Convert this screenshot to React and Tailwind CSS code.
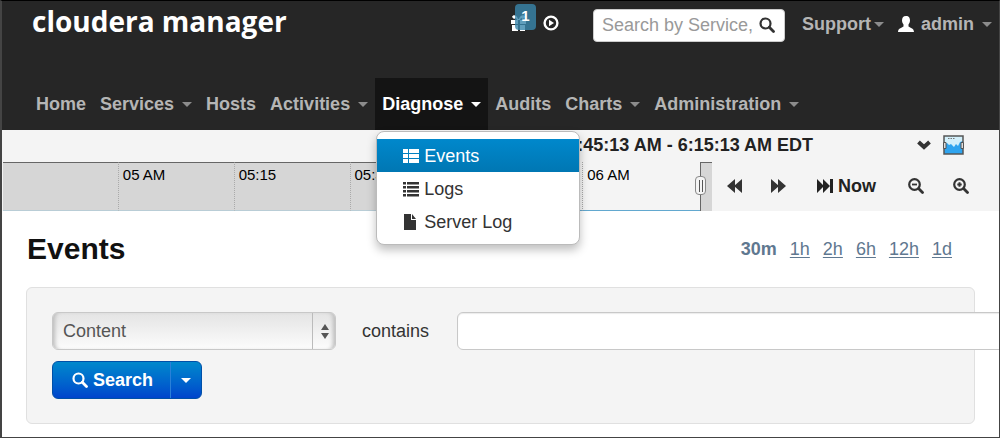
import React from 'react'
import { useState } from 'react'

function Caret({ className = '' }) {
  return (
    <svg viewBox="0 0 10 5" className={`w-[10px] h-[5px] fill-current ${className}`} aria-hidden="true">
      <path d="M0 0h10L5 5z" />
    </svg>
  )
}

function SearchIcon({ sign }) {
  return (
    <svg viewBox="0 0 16 16" className="w-4 h-4 shrink-0" fill="none" stroke="currentColor" aria-hidden="true">
      <circle cx="6.5" cy="6.5" r="5.3" strokeWidth="2.2" />
      <path d="M10.8 10.8l3.700 3.700" strokeWidth="2.8" strokeLinecap="round" />
      {sign === 'minus' && <path d="M4 6.5h5" strokeWidth="1.8" />}
      {sign === 'plus' && <path d="M4.300 6.500h4.400M6.500 4.300v4.400" strokeWidth="2" />}
    </svg>
  )
}

function GlassIcon() {
  return (
    <svg viewBox="0 0 16 16" className="w-4 h-4 shrink-0" fill="none" stroke="currentColor" aria-hidden="true">
      <circle cx="6.5" cy="6.5" r="5" strokeWidth="2.2" />
      <path d="M10.3 10.3l4.2 4.2" strokeWidth="2.8" strokeLinecap="round" />
    </svg>
  )
}

function TimeIcon({ d }) {
  return (
    <svg viewBox="0 0 16 14" className="w-4 h-[14px] fill-current" aria-hidden="true">
      <path d={d} />
    </svg>
  )
}

const menuIcons = {
  events: 'M0 1h5v4H0zM6 1h10v4H6zM0 6h5v4H0zM6 6h10v4H6zM0 11h5v4H0zM6 11h10v4H6z',
  logs: 'M0 1h3v2.500H0zM4 1h12v2.500H4zM0 5h3v2.500H0zM4 5h12v2.500H4zM0 9h3v2.500H0zM4 9h12v2.500H4zM0 13h3v2.500H0zM4 13h12v2.500H4z',
  file: 'M1 0h7v6h5v10H1zM9 0l4 5H9z',
}

const menu = [
  { label: 'Events', icon: 'events', active: true },
  { label: 'Logs', icon: 'logs' },
  { label: 'Server Log', icon: 'file' },
]

const nav = [
  { label: 'Home' },
  { label: 'Services', caret: true },
  { label: 'Hosts' },
  { label: 'Activities', caret: true },
  { label: 'Diagnose', caret: true, menu },
  { label: 'Audits' },
  { label: 'Charts', caret: true },
  { label: 'Administration', caret: true },
]

function DropdownMenu({ items }) {
  return (
    <ul className="absolute z-10 left-px top-full mt-px w-[204px] pt-[7px] pb-[6px] bg-white border border-[#bbb] rounded-lg shadow-[0_5px_10px_rgba(0,0,0,0.25)]">
      {items.map((item) => (
        <li key={item.label}>
          <a
            href="#"
            className={
              item.active
                ? 'flex items-center gap-[5px] h-[33px] pl-[26px] text-white bg-linear-to-b from-[#0088cc] to-[#0077b3]'
                : 'flex items-center gap-[5px] h-[33px] pl-[26px] text-[#333]'
            }
          >
            <svg viewBox="0 0 16 16" className="w-4 h-4 fill-current" aria-hidden="true">
              <path d={menuIcons[item.icon]} />
            </svg>
            {item.label}
          </a>
        </li>
      ))}
    </ul>
  )
}

function Header() {
  return (
    <header className="bg-[#262626] text-[#b5b5b5]">
      <div className="flex items-start pt-2 pl-[30px] pr-[7px] h-[77px]">
        <a href="#" className="font-['Open_Sans'] font-bold text-[28px] leading-6 text-white">cloudera manager</a>
        <div className="ml-auto flex items-center h-[33px] font-bold">
          <a href="#" aria-label="1 notification" className="relative block self-start mt-[6px] w-4 h-4 text-white">
            <svg viewBox="0 0 16 16" className="w-4 h-4 fill-current">
              <path d="M0 5h7v4H0zM9 5h6v4H9zM1 10h6v6H1zM9 10h5v6H9zM1 2c1-3 5-2 6 2h1c1-4 5-5 6-2l-2 2-2-1-1 2H6L5 3 3 4z" />
            </svg>
            <span className="absolute left-1 -top-[11px] w-[21px] h-[26px] rounded-sm bg-[#3a87ad]/80 text-center text-[15px] leading-6">1</span>
          </a>
          <button type="button" aria-label="Running commands" className="self-start mt-[6px] ml-4 text-white">
            <svg viewBox="0 0 16 16" className="w-4 h-4">
              <circle cx="8" cy="8" r="6.4" fill="none" stroke="currentColor" strokeWidth="2.4" />
              <path d="M6 4.8l5 3.2-5 3.2z" fill="currentColor" />
            </svg>
          </button>
          <div className="relative ml-[34px] text-[#333]">
            <input
              type="text"
              aria-label="Search"
              placeholder="Search by Service,"
              className="block w-[192px] h-[33px] pl-2 pr-7 rounded-sm bg-white font-normal border border-[#ccc] placeholder:text-[#999] outline-none"
            />
            <span className="absolute right-[10px] top-2"><GlassIcon /></span>
          </div>
          <a href="#" className="ml-[17px] pb-[3px] flex items-center gap-[3px]">Support<Caret className="text-[#8c8c8c]" /></a>
          <a href="#" className="ml-[14px] pb-[3px] flex items-center">
            <svg viewBox="0 0 16 16" className="w-4 h-4 fill-white" aria-hidden="true">
              <path d="M8 0c3 0 4 2 4 4.500c0 2-1 3-1.500 4v2c1 1 5.500 1.500 5.500 5.500H0c0-4 4.500-4.500 5.500-5.500v-2C5 7.500 4 6.500 4 4.500C4 2 5 0 8 0z" />
            </svg>
            <span className="ml-[7px] mr-2">admin</span>
            <Caret className="text-[#8c8c8c]" />
          </a>
        </div>
      </div>
      <nav>
        <ul className="flex pl-[27px] font-bold">
          {nav.map((item) => (
            <li key={item.label} className="relative">
              <a
                href="#"
                className={item.menu ? 'flex items-center h-[52px] px-[7px] bg-[#141414] text-white' : 'flex items-center h-[52px] px-[7px]'}
              >
                {item.label}
                {item.caret && <Caret className={item.menu ? 'ml-2' : 'ml-2 text-[#8c8c8c]'} />}
              </a>
              {item.menu && <div className="font-normal"><DropdownMenu items={item.menu} /></div>}
            </li>
          ))}
        </ul>
      </nav>
    </header>
  )
}

function TimeBar() {
  return (
    <section className="bg-[#f4f4f4] text-[#222]">
      <div className="flex items-center justify-end h-8 pr-[35px] pb-[3px]">
        <span className="font-bold">5:45:13 AM - 6:15:13 AM EDT</span>
        <button type="button" aria-label="Expand" className="ml-[104px]">
          <svg viewBox="0 0 14 10" className="w-[14px] h-[10px]" fill="none" stroke="#333" strokeWidth="4">
            <path d="M1.500 2L7 7l5.500-5" />
          </svg>
        </button>
        <button type="button" aria-label="Charts" className="ml-3">
          <svg viewBox="0 0 21 20" className="w-[21px] h-5">
            <path d="M1 1h19v18H1z" fill="#2fa4ef" />
            <path d="M1 1h19v5l-3 1-2 4-2-2-2 3-3-3-2 1-2-2-4 1z" fill="#d3f0fb" />
            <path d="M5 3.500h7" stroke="#777" strokeDasharray="1.500 1" />
            <path d="M1 1h19v18H1z" fill="none" stroke="#555" strokeWidth="1.500" />
            <path d="M0.500 7.500h2.500v6H0.500zM18 7.500h2.500v6h-2.500z" fill="#ddd" stroke="#555" />
          </svg>
        </button>
      </div>
      <div className="flex h-[49px]">
        <div className="flex-1 ml-px grid grid-cols-[115fr_116fr_116fr_117fr_116fr_118fr_12fr] text-[15px] leading-[23px] text-black">
          <div className="bg-[#d6d6d6] border-t border-t-[#666] border-b border-b-[#b9cdd6]" />
          <div className="bg-[#d6d6d6] border-t border-t-[#666] border-b border-b-[#b9cdd6] border-l border-l-[#aaa] [border-left-style:dotted] pl-1">05 AM</div>
          <div className="bg-[#d6d6d6] border-t border-t-[#666] border-b border-b-[#b9cdd6] border-l border-l-[#aaa] [border-left-style:dotted] pl-1">05:15</div>
          <div className="bg-[#d6d6d6] border-t border-t-[#666] border-b border-b-[#b9cdd6] border-l border-l-[#aaa] [border-left-style:dotted] pl-1">05:30</div>
          <div className="border-l border-l-[#666] border-b border-b-[#62a8cf] pl-1 pt-px">05:45</div>
          <div className="border-l border-l-[#aaa] [border-left-style:dotted] border-b border-b-[#62a8cf] pl-1 pt-px">06 AM</div>
          <div className="relative bg-[#d6d6d6] border-t border-l border-[#666]">
            <span className="absolute -left-[6px] top-[13px] flex justify-center items-center gap-[2px] w-[11px] h-[19px] rounded-sm border border-[#888] bg-[#f4f4f4]">
              <i className="w-px h-3 bg-[#555]" />
              <i className="w-px h-3 bg-[#555]" />
            </span>
          </div>
        </div>
        <div className="flex items-center w-[287px] pl-[15px] pb-px text-[#333]">
          <button type="button" aria-label="Back"><TimeIcon d="M8 0v14L0 7zM15 0v14L7 7z" /></button>
          <button type="button" aria-label="Forward" className="ml-7"><TimeIcon d="M0 0v14l8-7zM7 0v14l8-7z" /></button>
          <button type="button" className="ml-[30px] flex items-center gap-[5px] font-bold text-[#222]">
            <TimeIcon d="M0 0v14l7-7zM6 0v14l7-7zM13 0h3v14h-3z" />
            Now
          </button>
          <button type="button" aria-label="Zoom out" className="ml-8"><SearchIcon sign="minus" /></button>
          <button type="button" aria-label="Zoom in" className="ml-[29px]"><SearchIcon sign="plus" /></button>
        </div>
      </div>
    </section>
  )
}

const ranges = ['1h', '2h', '6h', '12h', '1d']

function Filters() {
  const [field, setField] = useState('Content')
  const [text, setText] = useState('')

  return (
    <form
      onSubmit={(e) => e.preventDefault()}
      className="ml-6 mr-6 pt-6 pb-6 px-[25px] bg-[#f4f4f4] border border-[#e0e0e0] rounded-md"
    >
      <div className="flex items-center">
        <div className="relative shrink-0">
          <select
            aria-label="Field"
            value={field}
            onChange={(e) => setField(e.target.value)}
            className="block appearance-none w-[284px] h-[38px] pl-[10px] rounded-md border border-[#c8c8c8] bg-linear-to-b from-[#e4e4e4] to-[#fcfcfc] shadow-[inset_5px_0_4px_-3px_#bbb,inset_-5px_0_4px_-3px_#bbb] text-[#555] outline-none"
          >
            <option>Content</option>
          </select>
          <span className="absolute right-0 inset-y-px w-6 flex flex-col items-center justify-center gap-[3px] border-l border-[#bbb] text-[#555] pointer-events-none">
            <svg viewBox="0 0 8 6" className="w-2 h-[6px] fill-current"><path d="M0 6h8L4 0z" /></svg>
            <svg viewBox="0 0 8 6" className="w-2 h-[6px] fill-current"><path d="M0 0h8L4 6z" /></svg>
          </span>
        </div>
        <label htmlFor="value" className="ml-[26px] mr-7 text-[#333]">contains</label>
        <input
          id="value"
          type="text"
          value={text}
          onChange={(e) => setText(e.target.value)}
          className="w-[800px] shrink-0 h-[38px] px-2 rounded-md bg-white border border-[#c8c8c8] shadow-[inset_0_1px_1px_rgba(0,0,0,0.08)] outline-none"
        />
      </div>
      <div className="inline-flex mt-[11px] h-[38px] rounded-md overflow-hidden border border-[#0050a8] bg-linear-to-b from-[#0088cc] to-[#0044cc] text-white">
        <button type="submit" className="flex items-center gap-[5px] pl-[19px] pr-[17px] font-bold"><GlassIcon />Search</button>
        <button type="button" aria-label="More search options" className="flex items-center px-[10px] border-l border-[#2a80d8]"><Caret /></button>
      </div>
    </form>
  )
}

function App() {
  return (
    <div className="overflow-hidden bg-white border border-l-2 border-[#444] border-t-black font-['Liberation_Sans',Arial,sans-serif] text-[18px] leading-6">
      <Header />
      <TimeBar />
      <main className="pb-[13px]">
        <div className="flex items-center justify-between h-[76px] pl-[25px] pr-[47px]">
          <h1 className="text-[30px] leading-9 font-bold text-[#111]">Events</h1>
          <div className="flex gap-[13px] text-[#5f7890]">
            <b>30m</b>
            {ranges.map((r) => (
              <a key={r} href="#" className="underline underline-offset-2">{r}</a>
            ))}
          </div>
        </div>
        <Filters />
      </main>
    </div>
  )
}

export default App
